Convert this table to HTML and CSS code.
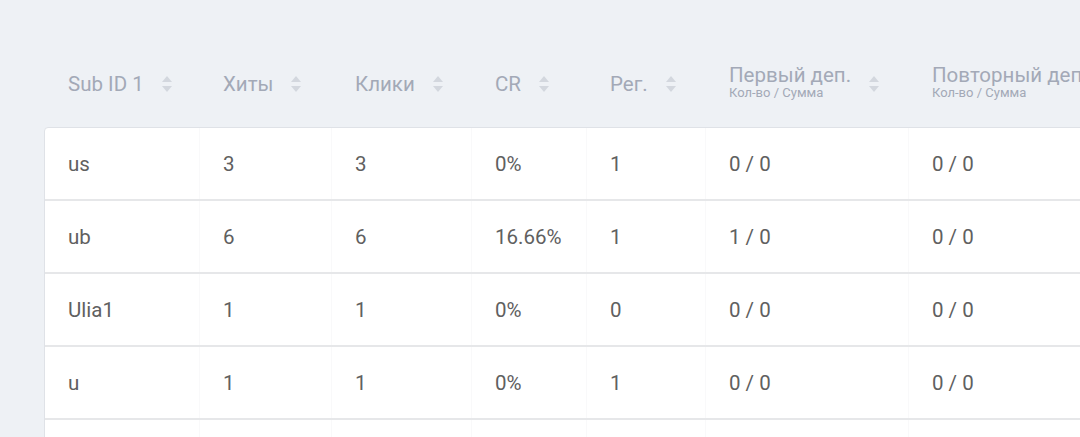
FILE: index.html
```html
<!DOCTYPE html>
<html lang="ru">
<head>
<meta charset="utf-8">
<link rel="stylesheet" href="styles.css">
</head>
<body>
<div class="page">
  <div class="thead">
    <div class="th"><span class="lbl">Sub ID 1</span><span class="sort"></span></div>
    <div class="th"><span class="lbl">Хиты</span><span class="sort"></span></div>
    <div class="th"><span class="lbl">Клики</span><span class="sort"></span></div>
    <div class="th"><span class="lbl">CR</span><span class="sort"></span></div>
    <div class="th"><span class="lbl">Рег.</span><span class="sort"></span></div>
    <div class="th"><span class="lbl two">Первый деп.<small>Кол-во / Сумма</small></span><span class="sort"></span></div>
    <div class="th"><span class="lbl two">Повторный деп.<small>Кол-во / Сумма</small></span><span class="sort"></span></div>
  </div>
  <div class="card">
    <div class="row">
      <div class="td">us</div><div class="td">3</div><div class="td">3</div><div class="td">0%</div><div class="td">1</div><div class="td">0 / 0</div><div class="td">0 / 0</div>
    </div>
    <div class="row">
      <div class="td">ub</div><div class="td">6</div><div class="td">6</div><div class="td">16.66%</div><div class="td">1</div><div class="td">1 / 0</div><div class="td">0 / 0</div>
    </div>
    <div class="row">
      <div class="td">Ulia1</div><div class="td">1</div><div class="td">1</div><div class="td">0%</div><div class="td">0</div><div class="td">0 / 0</div><div class="td">0 / 0</div>
    </div>
    <div class="row">
      <div class="td">u</div><div class="td">1</div><div class="td">1</div><div class="td">0%</div><div class="td">1</div><div class="td">0 / 0</div><div class="td">0 / 0</div>
    </div>
    <div class="row">
      <div class="td"></div><div class="td"></div><div class="td"></div><div class="td"></div><div class="td"></div><div class="td"></div><div class="td"></div>
    </div>
  </div>
</div>
</body>
</html>
```
FILE: styles.css
```css
html, body {
  margin: 0;
  padding: 0;
  background: #eef1f5;
  overflow: hidden;
  font-family: Roboto, "Noto Sans", sans-serif;
}
.page {
  padding: 50px 0 0 44px;
  width: 1400px;
}
.thead, .row {
  display: grid;
  grid-template-columns: 155px 132px 140px 115px 119px 203px 260px;
}
.thead {
  height: 68px;
  padding-bottom: 9px;
  align-items: center;
}
.th {
  display: flex;
  align-items: center;
  padding-left: 24px;
  color: #a3a9b7;
  font-size: 20.5px;
  white-space: nowrap;
}
.lbl {
  display: flex;
  flex-direction: column;
  line-height: 22px;
}
.lbl.two {
  margin-top: -4px;
}
.lbl small {
  font-size: 13px;
  line-height: 14px;
  margin-top: 0;
}
.sort {
  position: relative;
  flex: none;
  width: 11px;
  height: 20px;
  margin-left: 18px;
}
.sort::before, .sort::after {
  content: "";
  position: absolute;
  left: 0;
  border-left: 5.5px solid transparent;
  border-right: 5.5px solid transparent;
}
.sort::before {
  top: 2px;
  border-bottom: 6px solid #d3d7de;
}
.sort::after {
  bottom: 2px;
  border-top: 6px solid #d3d7de;
}
.card {
  background: #fff;
  border: 1px solid #dfe2e7;
  border-radius: 4px;
}
.row {
  height: 71px;
  border-bottom: 2px solid #e6e7e9;
}
.td {
  display: flex;
  align-items: center;
  padding-left: 23px;
  color: #606060;
  font-size: 20.5px;
  border-right: 1px solid #f9f9fa;
}
```
